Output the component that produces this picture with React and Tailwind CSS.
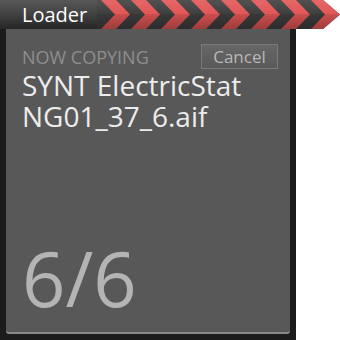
import React from "react"

const Chevrons = () => {
  const stripes = Array.from({ length: 9 }, (_, i) => i * 30 - 2)
  return (
    <svg width="243" height="29" viewBox="0 0 243 29" className="block">
      <defs>
        <clipPath id="arrow">
          <polygon points="0,0 226,0 243,14.5 226,29 0,29" />
        </clipPath>
        <linearGradient id="shade" x1="0" y1="0" x2="0" y2="1">
          <stop offset="0" stopColor="#ffffff" stopOpacity="0.1" />
          <stop offset="0.5" stopColor="#ffffff" stopOpacity="0" />
          <stop offset="0.5" stopColor="#000000" stopOpacity="0.1" />
          <stop offset="1" stopColor="#000000" stopOpacity="0.3" />
        </linearGradient>
      </defs>
      <g clipPath="url(#arrow)">
        <rect x="0" y="0" width="243" height="29" fill="#3e3e3e" />
        {stripes.map((x) => (
          <polygon
            key={x}
            points={`${x + 6},0 ${x + 21},0 ${x + 35},14.5 ${x + 21},29 ${x + 6},29 ${x + 20},14.5`}
            fill="#e25656"
          />
        ))}
        <rect x="0" y="0" width="243" height="29" fill="url(#shade)" />
      </g>
    </svg>
  )
}

export default function App() {
  return (
    <div
      className="w-[340px] h-[340px] bg-white overflow-hidden flex flex-col"
      style={{ fontFamily: '"Open Sans", "Liberation Sans", sans-serif' }}
    >
      {/* header */}
      <div className="flex h-[29px] shrink-0">
        <div className="w-[97px] h-full bg-gradient-to-b from-[#585858] via-[#414141] to-[#262626] pl-[22px] pt-[1px] flex items-center">
          <span className="text-white text-[20px] leading-none font-medium">Loader</span>
        </div>
        <Chevrons />
      </div>

      {/* panel */}
      <div className="w-[296px] flex-1 bg-[#1c1c1c] px-[6px] pb-[6px] flex">
        <div className="flex-1 bg-[#585858] border-b-2 border-[#8a8a8a] rounded-b-[3px] flex flex-col pl-[16px] pr-[12px] pt-[15px]">
          <div className="flex items-center justify-between">
            <span className="text-[#8e8e8e] text-[18px] leading-none font-medium">NOW COPYING</span>
            <button className="w-[77px] h-[25px] border border-[#7a7a7a] bg-gradient-to-b from-[#666666] to-[#5a5a5a] text-[#b8b8b8] text-[17px] leading-none font-medium flex items-center justify-center">
              Cancel
            </button>
          </div>
          <div className="text-[#ececec] text-[28px] leading-[31px] mt-[1px] font-medium">
            <div>SYNT ElectricStat</div>
            <div>NG01_37_6.aif</div>
          </div>
          <div className="mt-auto mb-[16px] text-[#b4b4b4] text-[76px] leading-none">6/6</div>
        </div>
      </div>
    </div>
  )
}
